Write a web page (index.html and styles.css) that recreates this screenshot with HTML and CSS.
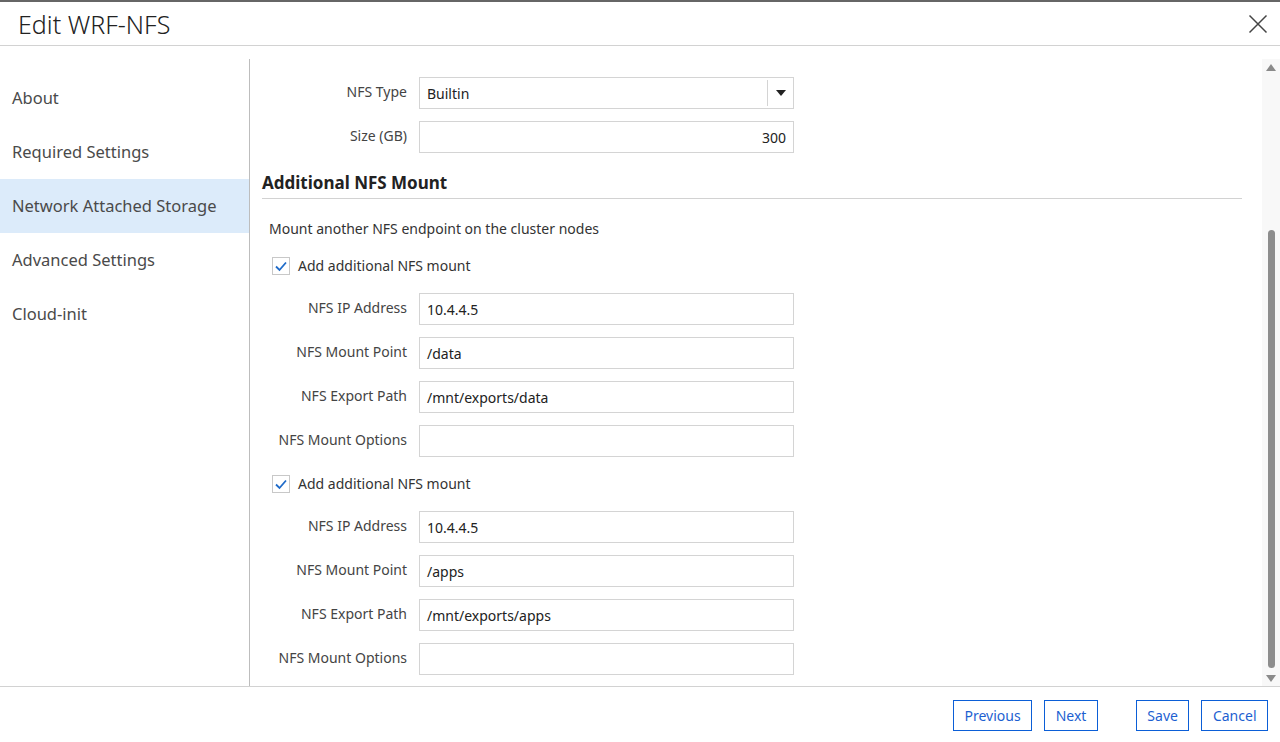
FILE: index.html
```html
<!DOCTYPE html>
<html>
<head>
<meta charset="utf-8">
<link rel="stylesheet" href="styles.css">
</head>
<body>
<div class="dialog">
  <header class="head">
    <h1 class="title">Edit WRF-NFS</h1>
    <svg class="close" width="20" height="20" viewBox="0 0 20 20"><path d="M1.5 1.5 L18.5 18.5 M18.5 1.5 L1.5 18.5" stroke="#444" stroke-width="1.5" fill="none"/></svg>
  </header>
  <div class="body">
    <nav class="side">
      <div class="nav-item">About</div>
      <div class="nav-item">Required Settings</div>
      <div class="nav-item active">Network Attached Storage</div>
      <div class="nav-item">Advanced Settings</div>
      <div class="nav-item">Cloud-init</div>
    </nav>
    <main class="content">
      <div class="scroll">
        <div class="row first">
          <label class="lbl">NFS Type</label>
          <div class="input select"><span>Builtin</span><span class="sel-btn"><svg width="10" height="6" viewBox="0 0 10 6"><path d="M0 0 H10 L5 6 Z" fill="#222"/></svg></span></div>
        </div>
        <div class="row">
          <label class="lbl">Size (GB)</label>
          <div class="input num">300</div>
        </div>
        <h2 class="section">Additional NFS Mount</h2>
        <p class="desc">Mount another NFS endpoint on the cluster nodes</p>

        <div class="check">
          <span class="box"><svg width="14" height="14" viewBox="0 0 14 14"><path d="M2 7.5 L5.5 11 L12 3.5" stroke="#1f6bc9" stroke-width="1.8" fill="none"/></svg></span>
          <span>Add additional NFS mount</span>
        </div>
        <div class="row"><label class="lbl">NFS IP Address</label><div class="input">10.4.4.5</div></div>
        <div class="row"><label class="lbl">NFS Mount Point</label><div class="input">/data</div></div>
        <div class="row"><label class="lbl">NFS Export Path</label><div class="input">/mnt/exports/data</div></div>
        <div class="row"><label class="lbl">NFS Mount Options</label><div class="input"></div></div>

        <div class="check second">
          <span class="box"><svg width="14" height="14" viewBox="0 0 14 14"><path d="M2 7.5 L5.5 11 L12 3.5" stroke="#1f6bc9" stroke-width="1.8" fill="none"/></svg></span>
          <span>Add additional NFS mount</span>
        </div>
        <div class="row"><label class="lbl">NFS IP Address</label><div class="input">10.4.4.5</div></div>
        <div class="row"><label class="lbl">NFS Mount Point</label><div class="input">/apps</div></div>
        <div class="row"><label class="lbl">NFS Export Path</label><div class="input">/mnt/exports/apps</div></div>
        <div class="row"><label class="lbl">NFS Mount Options</label><div class="input"></div></div>
      </div>
      <div class="scrollbar">
        <svg class="arrow" width="10" height="7" viewBox="0 0 10 7"><path d="M0 7 L5 0 L10 7 Z" fill="#8a8a8a"/></svg>
        <div class="track"><div class="thumb"></div></div>
        <svg class="arrow" width="10" height="7" viewBox="0 0 10 7"><path d="M0 0 L10 0 L5 7 Z" fill="#8a8a8a"/></svg>
      </div>
    </main>
  </div>
  <footer class="foot">
    <button class="btn">Previous</button>
    <button class="btn">Next</button>
    <button class="btn gap">Save</button>
    <button class="btn">Cancel</button>
  </footer>
</div>
</body>
</html>
```
FILE: styles.css
```css
* { box-sizing: border-box; }
html, body { margin: 0; padding: 0; }
body {
  font-family: "Noto Sans", "Open Sans", sans-serif;
  color: #333;
  background: #fff;
  width: 1280px;
  height: 742px;
  overflow: hidden;
}
.dialog {
  display: flex;
  flex-direction: column;
  height: 742px;
  border-top: 2px solid #666;
}
.head {
  height: 44px;
  border-bottom: 1px solid #d2d2d2;
  display: flex;
  align-items: center;
  justify-content: space-between;
  padding: 0 12px 0 18px;
}
.title {
  margin: 0;
  font-weight: 300;
  font-size: 25px;
  color: #222;
  letter-spacing: 0;
}
.close { margin-top: 1px; }
.body {
  flex: 1;
  display: flex;
  padding-top: 13px;
  min-height: 0;
}
.side {
  width: 250px;
  border-right: 1px solid #bdbdbd;
  padding-top: 12px;
}
.nav-item {
  height: 54px;
  line-height: 54px;
  padding-left: 12px;
  font-size: 16.5px;
  color: #4a4a4a;
}
.nav-item.active { background: #dcebfa; }
.content {
  flex: 1;
  display: flex;
  min-width: 0;
}
.scroll {
  flex: 1;
  padding: 18px 20px 0 0;
  overflow: hidden;
}
.row {
  display: flex;
  align-items: flex-start;
  margin-bottom: 12px;
}
.lbl {
  width: 157px;
  text-align: right;
  margin-right: 12px;
  font-size: 14px;
  color: #444;
  line-height: 30px;
}
.input {
  width: 375px;
  height: 32px;
  border: 1px solid #d4d4d4;
  font-size: 14px;
  color: #222;
  padding: 0 7px;
  line-height: 31px;
}
.select {
  display: flex;
  justify-content: space-between;
  padding-right: 0;
}
.sel-btn {
  width: 26px;
  margin: 2px 0;
  border-left: 1px solid #d4d4d4;
  display: flex;
  align-items: center;
  justify-content: center;
}
.num { text-align: right; }
.section {
  margin: 18px 0 0 12px;
  font-size: 17px;
  font-weight: 700;
  color: #222;
  line-height: 24px;
  padding-bottom: 3px;
  border-bottom: 1px solid #d2d2d2;
}
.desc {
  margin: 20px 0 0 19px;
  font-size: 14px;
  line-height: 20px;
  color: #333;
}
.check {
  display: flex;
  align-items: center;
  margin: 17px 0 18px 22px;
  font-size: 14px;
  color: #333;
}
.check.second { margin-top: 17px; }
.box {
  width: 18px;
  height: 18px;
  border: 1px solid #c8c8c8;
  display: flex;
  align-items: center;
  justify-content: center;
  margin-right: 8px;
}
.scrollbar {
  width: 18px;
  background: #f8f8f8;
  display: flex;
  flex-direction: column;
  align-items: center;
  padding: 5px 0 4px;
}
.arrow { flex: none; }
.track {
  flex: 1;
  width: 100%;
  display: flex;
  justify-content: center;
  padding: 159px 0 7px;
}
.thumb {
  width: 7px;
  background: #8d8d8d;
  border-radius: 4px;
}
.foot {
  height: 56px;
  border-top: 1px solid #d2d2d2;
  display: flex;
  justify-content: flex-end;
  align-items: flex-start;
  padding: 13px 12px 0 0;
  gap: 12px;
}
.btn {
  font-family: inherit;
  font-size: 14px;
  color: #1d5fd1;
  background: #fff;
  border: 1.5px solid #0b5ed7;
  height: 31px;
  padding: 0 10.5px;
  border-radius: 0;
}
.btn.gap { margin-left: 26px; }
```
